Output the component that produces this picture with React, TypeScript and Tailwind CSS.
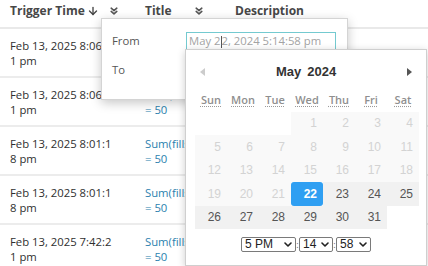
import { ArrowDown } from 'lucide-react';

type AlertRow = {
  time: string;
  timeRest: string;
};

const ROWS: AlertRow[] = [
  { time: 'Feb 13, 2025 8:06:1', timeRest: '1 pm' },
  { time: 'Feb 13, 2025 8:06:1', timeRest: '1 pm' },
  { time: 'Feb 13, 2025 8:01:1', timeRest: '8 pm' },
  { time: 'Feb 13, 2025 8:01:1', timeRest: '8 pm' },
  { time: 'Feb 13, 2025 7:42:2', timeRest: '1 pm' },
];

const DAY_NAMES = ['Sun', 'Mon', 'Tue', 'Wed', 'Thu', 'Fri', 'Sat'];

// May 2024 starts on a Wednesday, selected day is the 22nd, earlier days are disabled
const WEEKS: (number | null)[][] = [
  [null, null, null, 1, 2, 3, 4],
  [5, 6, 7, 8, 9, 10, 11],
  [12, 13, 14, 15, 16, 17, 18],
  [19, 20, 21, 22, 23, 24, 25],
  [26, 27, 28, 29, 30, 31, null],
];
const SELECTED_DAY = 22;

const ChevronsDown = () => (
  <svg
    width="8"
    height="8"
    viewBox="0 0 8 8"
    fill="none"
    stroke="#555"
    strokeWidth="1.6"
    strokeLinecap="round"
    strokeLinejoin="round"
  >
    <path d="M1.2 1.2 4 3.6 6.8 1.2" />
    <path d="M1.2 4.4 4 6.8 6.8 4.4" />
  </svg>
);

const TimeSelect = ({ label, width }: { label: string; width: string }) => (
  <span
    className={`flex h-[15px] ${width} items-center justify-between rounded-[2px] border border-[#7a7a7a] bg-white pl-[3px] pr-[3px] font-['Liberation_Sans',Arial,sans-serif] text-[12px] leading-[13px] text-[#222]`}
  >
    <span>{label}</span>
    <svg width="8" height="5" viewBox="0 0 8 5" fill="none" stroke="#222" strokeWidth="1.6" strokeLinecap="round" strokeLinejoin="round">
      <path d="M1 1 4 4 7 1" />
    </svg>
  </span>
);

const Colon = () => (
  <span className="flex w-[3px] justify-center text-[9px] leading-[9px] text-[#666]">:</span>
);

const DatePicker = () => {
  return (
    <div className="absolute left-[185px] top-[49px] h-[217px] w-[242px] border border-[#cfcfcf] bg-white shadow-[0_2px_8px_rgba(0,0,0,0.2)]">
      <div className="flex h-[44px] items-center justify-between px-[14px]">
        <svg width="5" height="8" viewBox="0 0 5 8">
          <path d="M5 0 0 4 5 8z" fill="#cccccc" />
        </svg>
        <div className="flex gap-[6px] font-['Liberation_Sans',Arial,sans-serif] text-[13px] font-bold text-[#333]">
          <span>May</span>
          <span>2024</span>
        </div>
        <svg width="5" height="8" viewBox="0 0 5 8">
          <path d="M0 0 5 4 0 8z" fill="#555555" />
        </svg>
      </div>

      <div className="ml-[9px] grid h-[12px] w-[224px] grid-cols-7 text-center text-[11px] font-semibold leading-[12px] text-[#8f8f8f]">
        {DAY_NAMES.map((d) => (
          <span key={d}>
            <abbr className="underline decoration-[#9a9a9a] decoration-dotted underline-offset-[2px]" title={d}>
              {d}
            </abbr>
          </span>
        ))}
      </div>

      <div className="ml-[9px] mt-[5.5px] w-[224px] font-['Liberation_Sans',Arial,sans-serif] text-[12px]">
        {WEEKS.map((week, wi) => (
          <div key={wi} className="grid h-[23.5px] grid-cols-7">
            {week.map((day, di) => {
              if (day === null) return <span key={di} />;
              const selected = day === SELECTED_DAY;
              const disabled = day < SELECTED_DAY;
              return (
                <span
                  key={di}
                  className={`flex items-center justify-end pr-[6px] ${
                    selected
                      ? 'rounded-[3px] bg-[#2f9ff2] font-bold text-white'
                      : disabled
                        ? 'bg-[#f9f9f9] text-[#d3d3d3]'
                        : 'bg-[#f1f1f1] text-[#555]'
                  }`}
                >
                  {day}
                </span>
              );
            })}
          </div>
        ))}
      </div>

      <div className="mt-[8px] flex h-[15px] items-center justify-center">
        <TimeSelect label="5 PM" width="w-[55px]" />
        <Colon />
        <TimeSelect label="14" width="w-[34px]" />
        <Colon />
        <TimeSelect label="58" width="w-[35px]" />
      </div>
    </div>
  );
};

const RangePopover = () => {
  return (
    <div className="absolute left-[101px] top-[18px] h-[82px] w-[247px] border border-[#d4d4d4] bg-white px-[10px] pt-[13px] text-[11.3px] text-[#555] shadow-[0_3px_10px_rgba(0,0,0,0.22)]">
      <div className="flex h-[19px] items-center">
        <span className="w-[74px]">From</span>
        <div className="flex h-[19px] w-[150px] items-center border border-[#74cad0] pl-[2px] text-[#a3a3a3]">
          May 2
          <span className="h-[12px] w-px bg-[#555]" />
          2, 2024 5:14:58 pm
        </div>
      </div>
      <div className="mt-[10px] flex h-[19px] items-center">
        <span>To</span>
      </div>
    </div>
  );
};

export default function App() {
  return (
    <div className="relative h-[266px] w-[428px] overflow-hidden bg-white font-['Open_Sans',sans-serif]">
      <div className="flex h-[29px] items-start border-b-2 border-[#e9e9e9] pt-[3px] text-[12px] font-bold leading-[16px] text-[#474747]">
        <div className="flex h-[16px] w-[145px] items-center pl-[10px]">
          <span>Trigger Time</span>
          <ArrowDown size={12} strokeWidth={2.75} className="ml-[2px]" />
          <span className="ml-[11px]">
            <ChevronsDown />
          </span>
        </div>
        <div className="flex h-[16px] w-[90px] items-center">
          <span>Title</span>
          <span className="ml-[23px]">
            <ChevronsDown />
          </span>
        </div>
        <div className="flex h-[16px] items-center">
          <span>Description</span>
        </div>
      </div>

      {ROWS.map((r, i) => (
        <div key={i} className="flex h-[49px] border-b-2 border-[#ececec] pt-[9px] text-[11.3px] leading-[15px]">
          <div className="w-[145px] pl-[10px] text-[#2f2f2f]">
            <div>{r.time}</div>
            <div>{r.timeRest}</div>
          </div>
          <div className="w-[90px] text-[#2c7fae]">
            <div className="whitespace-nowrap">Sum(fills)</div>
            <div>= 50</div>
          </div>
        </div>
      ))}

      <RangePopover />
      <DatePicker />
    </div>
  );
}
